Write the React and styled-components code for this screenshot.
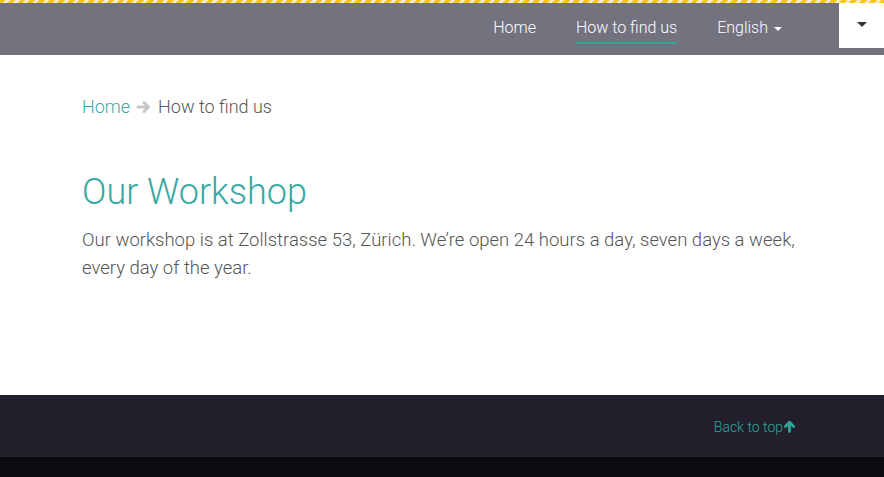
import styled, { createGlobalStyle } from "styled-components";

const GlobalStyle = createGlobalStyle`
  html, body {
    margin: 0;
    padding: 0;
    background: #ffffff;
    font-family: Roboto, "Liberation Sans", sans-serif;
    font-weight: 300;
  }
`;

const teal = "#3aa8a4";

const Page = styled.div`
  display: flex;
  flex-direction: column;
  min-height: 477px;
`;

const Stripe = styled.div`
  height: 3px;
  background: repeating-linear-gradient(
    -45deg,
    #f6c814 0 4px,
    #f7ecc7 4px 7px
  );
`;

const NavBar = styled.nav`
  height: 52px;
  background: #73727f;
  display: flex;
  align-items: flex-start;
  justify-content: flex-end;
`;

const NavLinks = styled.div`
  display: flex;
  height: 41px;
  align-items: flex-end;
  gap: 40px;
  margin-right: 57px;
`;

const NavLink = styled.a`
  color: #ffffff;
  font-size: 16px;
  font-weight: 300;
  text-decoration: none;
  padding-bottom: 4px;
  white-space: nowrap;
  line-height: 20px;
  border-bottom: 2px solid ${(p) => (p.$active ? "#2fa59b" : "transparent")};
`;

const Caret = styled.span`
  display: inline-block;
  margin-left: 6px;
  vertical-align: middle;
  border-left: 4px solid transparent;
  border-right: 4px solid transparent;
  border-top: 4px solid #ffffff;
`;

const MenuButton = styled.button`
  width: 45px;
  height: 45px;
  border: none;
  background: #ffffff;
  display: flex;
  align-items: center;
  justify-content: center;
  padding: 0;
`;

const DarkCaret = styled.span`
  border-left: 5px solid transparent;
  border-right: 5px solid transparent;
  border-top: 5px solid #333;
  margin-top: -2px;
`;

const Main = styled.main`
  padding: 41px 82px 0;
  height: 340px;
  box-sizing: border-box;
`;

const Breadcrumb = styled.div`
  display: flex;
  align-items: center;
  font-size: 18px;
  color: #555;
  gap: 6px;
`;

const Crumb = styled.a`
  color: ${teal};
  text-decoration: none;
`;

const Title = styled.h1`
  margin: 53px 0 0;
  font-size: 36px;
  font-weight: 300;
  color: ${teal};
  line-height: 44px;
`;

const Text = styled.p`
  margin: 12px 0 0;
  font-size: 18.5px;
  line-height: 28px;
  color: #555;
  max-width: 730px;
`;

const Footer = styled.footer`
  height: 62px;
  background: #221e2b;
  display: flex;
  align-items: center;
  justify-content: flex-end;
  padding-right: 88px;
`;

const BackLink = styled.a`
  color: #2fa59b;
  font-size: 14px;
  text-decoration: none;
  display: flex;
  align-items: center;
  margin-top: 1px;
`;

const BottomBar = styled.div`
  height: 20px;
  background: #0b0a10;
`;

export default function App() {
  return (
    <Page>
      <GlobalStyle />
      <Stripe />
      <NavBar>
        <NavLinks>
          <NavLink href="#">Home</NavLink>
          <NavLink href="#" $active>
            How to find us
          </NavLink>
          <NavLink href="#">
            English
            <Caret />
          </NavLink>
        </NavLinks>
        <MenuButton>
          <DarkCaret />
        </MenuButton>
      </NavBar>
      <Main>
        <Breadcrumb>
          <Crumb href="#">Home</Crumb>
          <svg width="16" height="16" viewBox="0 0 16 16">
            <path
              d="M2 8h10M8 3.5l4.5 4.5L8 12.5"
              stroke="#c8c8c8"
              strokeWidth="3"
              fill="none"
              strokeLinecap="round"
              strokeLinejoin="round"
            />
          </svg>
          <span>How to find us</span>
        </Breadcrumb>
        <Title>Our Workshop</Title>
        <Text>
          Our workshop is at Zollstrasse 53, Zürich. We’re open 24 hours a day,
          seven days a week, every day of the year.
        </Text>
      </Main>
      <Footer>
        <BackLink href="#">
          Back to top
          <svg width="13" height="13" viewBox="0 0 14 14">
            <path
              d="M7 12.5V3M2.5 7L7 2.5 11.5 7"
              stroke="#2fa59b"
              strokeWidth="3"
              fill="none"
              strokeLinecap="round"
              strokeLinejoin="round"
            />
          </svg>
        </BackLink>
      </Footer>
      <BottomBar />
    </Page>
  );
}
